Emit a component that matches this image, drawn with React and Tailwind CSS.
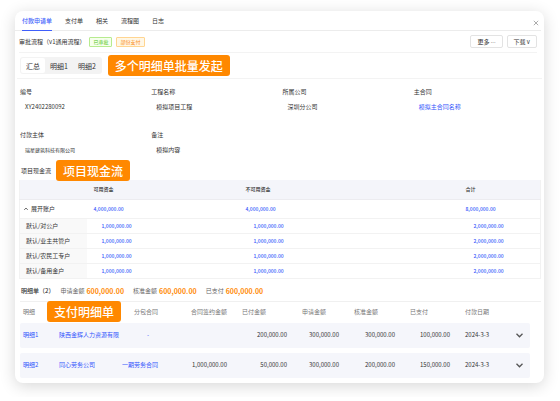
import React, { useState } from 'react';

const tabs = ['付款申请单', '支付单', '相关', '流程图', '日志'];

const segments = ['汇总', '明细1', '明细2'];

const fields = [
  { label: '编号', value: 'XY2402280092' },
  { label: '工程名称', value: '模拟项目工程' },
  { label: '所属公司', value: '深圳分公司' },
  { label: '主合同', value: '模拟主合同名称', link: true },
  { label: '付款主体', value: '瑞星建筑科技有限公司', small: true },
  { label: '备注', value: '模拟内容' }
];

const accounts = ['默认/对公户', '默认/业主共管户', '默认/农民工专户', '默认/备用金户'];

const totals = [
  { label: '申请金额', value: '600,000.00' },
  { label: '核准金额', value: '600,000.00' },
  { label: '已支付', value: '600,000.00' }
];

const details = [
  {
    name: '明细1',
    payee: '陕西金辉人力资源有限',
    contract: null,
    signed: '',
    amounts: ['200,000.00', '300,000.00', '300,000.00', '100,000.00'],
    date: '2024-3-3'
  },
  {
    name: '明细2',
    payee: '同心劳务公司',
    contract: '一期劳务合同',
    signed: '1,000,000.00',
    amounts: ['50,000.00', '300,000.00', '200,000.00', '150,000.00'],
    date: '2024-3-3'
  }
];

/**
 * Orange callout label
 */
const Callout = ({ children, className = '' }) => (
  <span
    className={`h-[21px] px-[7px] rounded-[3px] bg-[#ff8800] text-white text-[12px] leading-[21px] font-medium whitespace-nowrap ${className}`}
  >
    {children}
  </span>
);

const Link = ({ children }) => (
  <a href="#" className="text-[#3355fb]">{children}</a>
);

/**
 * Top tabs with close button
 */
const Header = () => {
  const [active, setActive] = useState(0);

  return (
    <div className="flex justify-between h-5 mr-[3px] pl-[7px] pr-[2px] border-b border-[#ececec]">
      <nav className="flex gap-[13px]">
        {tabs.map((tab, idx) => (
          <button
            key={tab}
            onClick={() => setActive(idx)}
            className={`h-5 border-b ${
              active === idx ? 'border-[#3f5ffb] text-[#3f5ffb] font-medium' : 'border-transparent'
            }`}
          >
            {tab}
          </button>
        ))}
      </nav>
      <button aria-label="关闭" className="mt-1 text-[#888]">
        <svg width="6" height="6" viewBox="0 0 6 6" fill="none" stroke="currentColor" strokeWidth="0.7">
          <path d="M0.8 0.8 5.2 5.2M5.2 0.8 0.8 5.2" />
        </svg>
      </button>
    </div>
  );
};

const Toolbar = () => (
  <div className="flex items-center justify-between h-[22px] ml-1 mr-[7px] border-b border-[#f3f3f3]">
    <div className="flex items-center gap-1">
      <h1>审批流程（v1通用流程）</h1>
      <span className="px-[3px] border border-[#b7eb8f] bg-[#f6ffed] rounded-[1px] text-[#52c41a] text-[5px]">已审批</span>
      <span className="px-[3px] border border-[#ffd591] bg-[#fff7e6] rounded-[1px] text-[#fa8c16] text-[5px]">部份支付</span>
    </div>
    <div className="flex gap-1">
      <button className="h-[13px] px-[6px] border border-[#e3e3e3] rounded-[2px]">
        更多 <span className="font-['Open_Sans',sans-serif]">···</span>
      </button>
      <button className="h-[13px] px-[6px] border border-[#e3e3e3] rounded-[2px]">下载 v</button>
    </div>
  </div>
);

const Segments = () => {
  const [active, setActive] = useState(0);

  return (
    <div className="flex items-center gap-[6px] h-[26px] mx-[2px] pl-[3px] border-b border-[#f3f3f3]">
      <div className="flex p-px rounded-[3px] bg-[#f3f3f3]">
        {segments.map((item, idx) => (
          <button
            key={item}
            onClick={() => setActive(idx)}
            className={`h-[15px] px-[5px] rounded-[2px] text-[7px] ${active === idx ? 'bg-white' : ''}`}
          >
            {item}
          </button>
        ))}
      </div>
      <Callout>多个明细单批量发起</Callout>
    </div>
  );
};

const Fields = () => (
  <dl className="grid grid-cols-4 gap-x-px gap-y-5 pl-[5px] pt-[9px]">
    {fields.map((field) => (
      <div key={field.label}>
        <dt>{field.label}</dt>
        <dd className={`mt-[7px] pl-[5px] ${field.small ? 'text-[5px]' : ''}`}>
          {field.link ? <Link>{field.value}</Link> : field.value}
        </dd>
      </div>
    ))}
  </dl>
);

/**
 * Cash flow table, grouped by account
 */
const CashFlow = () => {
  const [open, setOpen] = useState(true);

  return (
    <section className="mt-[6px] ml-1 mr-1">
      <div className="relative flex items-center gap-[5px] -mb-px pl-[2px]">
        <h2>项目现金流</h2>
        <Callout>项目现金流</Callout>
      </div>
      <table className="w-full table-fixed text-[5px] text-left border border-t-0 border-[#f2f2f2]">
        <colgroup>
          <col className="w-[67px]" />
          <col className="w-[152px]" />
          <col className="w-[220px]" />
          <col className="w-[82px]" />
        </colgroup>
        <thead>
          <tr className="h-[19px] bg-[#f4f5fa] border-b border-[#ececf0]">
            <th></th>
            <th className="pl-[7px] font-medium">可用资金</th>
            <th className="pl-[7px] font-medium">不可用资金</th>
            <th className="pl-[7px] font-medium">合计</th>
          </tr>
        </thead>
        <tbody>
          <tr className="h-[19px] font-medium">
            <td className="pl-1 text-[6px] font-normal">
              <button onClick={() => setOpen(!open)} className="flex items-center gap-[3px]">
                <svg width="4" height="4" viewBox="0 0 4 4" fill="none" stroke="currentColor" strokeWidth="0.8">
                  <path d="M0.3 2.8 2 1.1 3.7 2.8" />
                </svg>
                展开账户
              </button>
            </td>
            <td className="pl-[7px]"><Link>4,000,000.00</Link></td>
            <td className="pl-[7px]"><Link>4,000,000.00</Link></td>
            <td className="pl-[7px]"><Link>8,000,000.00</Link></td>
          </tr>
          {open && accounts.map((account) => (
            <tr key={account} className="h-[15px] border-t border-[#f2f2f2] font-medium">
              <td className="pl-[6px] bg-[#f9f9f9] text-[6px] font-normal">{account}</td>
              <td className="pl-[15px]"><Link>1,000,000.00</Link></td>
              <td className="pl-[15px]"><Link>1,000,000.00</Link></td>
              <td className="pl-[15px]"><Link>2,000,000.00</Link></td>
            </tr>
          ))}
        </tbody>
      </table>
    </section>
  );
};

/**
 * Payment details
 */
const Details = () => (
  <section className="ml-[5px] mr-[3px]">
    <div className="flex items-center gap-[9px] pt-2 pb-[6px] pl-px border-b border-[#f0f0f0]">
      <h2 className="-mr-[3px] font-medium">明细单（2）</h2>
      {totals.map((total) => (
        <p key={total.label} className="flex gap-[2px] text-[#666]">
          {total.label}
          <strong className="text-[7px] font-bold text-[#ff8c0a]">{total.value}</strong>
        </p>
      ))}
    </div>
    <div className="pr-[11px] -mb-[2px]">
      <table className="w-full table-fixed border-separate border-spacing-x-0 border-spacing-y-[5px]">
        <colgroup>
          <col className="w-[36px]" />
          <col className="w-[64px]" />
          <col className="w-[39px]" />
          <col className="w-[69px]" />
          <col className="w-[60px]" />
          <col className="w-[52px]" />
          <col className="w-[56px]" />
          <col className="w-[55px]" />
          <col className="w-[55px]" />
          <col className="w-[24px]" />
        </colgroup>
        <thead>
          <tr className="h-[11px] text-left text-[#777]">
            <th className="pl-[3px] font-normal">明细</th>
            <th className="relative">
              <Callout className="absolute -top-[6px] -left-[9px]">支付明细单</Callout>
            </th>
            <th className="pr-px text-right font-normal">分包合同</th>
            <th className="pr-px text-right font-normal">合同签约金额</th>
            <th className="pl-[14px] font-normal">已付金额</th>
            <th className="pl-[14px] font-normal">申请金额</th>
            <th className="pl-[14px] font-normal">核准金额</th>
            <th className="pl-[14px] font-normal">已支付</th>
            <th className="pl-[14px] font-normal">付款日期</th>
            <th></th>
          </tr>
        </thead>
        <tbody>
          {details.map((row) => (
            <tr key={row.name} className="h-[25px] bg-[#f5f6fb]">
              <td className="pl-[3px] rounded-l-[2px]"><Link>{row.name}</Link></td>
              <td className="pl-[3px] whitespace-nowrap"><Link>{row.payee}</Link></td>
              <td className={`text-right whitespace-nowrap ${row.contract ? 'pr-px' : 'pr-[10px]'}`}>
                <Link>{row.contract || '-'}</Link>
              </td>
              <td className="pr-px text-right">{row.signed}</td>
              {row.amounts.map((amount, idx) => (
                <td key={idx} className="pr-px text-right">{amount}</td>
              ))}
              <td className="pl-[14px]">{row.date}</td>
              <td className="pl-[10px] rounded-r-[2px]">
                <button aria-label="展开" className="block text-[#555]">
                  <svg width="7" height="5" viewBox="0 0 7 5" fill="none" stroke="currentColor" strokeWidth="1.3">
                    <path d="M0.5 0.8 3.5 3.8 6.5 0.8" />
                  </svg>
                </button>
              </td>
            </tr>
          ))}
        </tbody>
      </table>
    </div>
  </section>
);

const App = () => (
  <div className="pt-[11px] pb-4 pl-[15px] pr-4 bg-white">
    <main className="rounded-lg bg-white shadow-[0_3px_16px_rgba(0,0,0,0.16)] text-[6px] leading-[8px] text-[#333] font-['Noto_Sans_CJK_SC',sans-serif]">
      <Header />
      <Toolbar />
      <Segments />
      <Fields />
      <CashFlow />
      <Details />
    </main>
  </div>
);

export default App;
